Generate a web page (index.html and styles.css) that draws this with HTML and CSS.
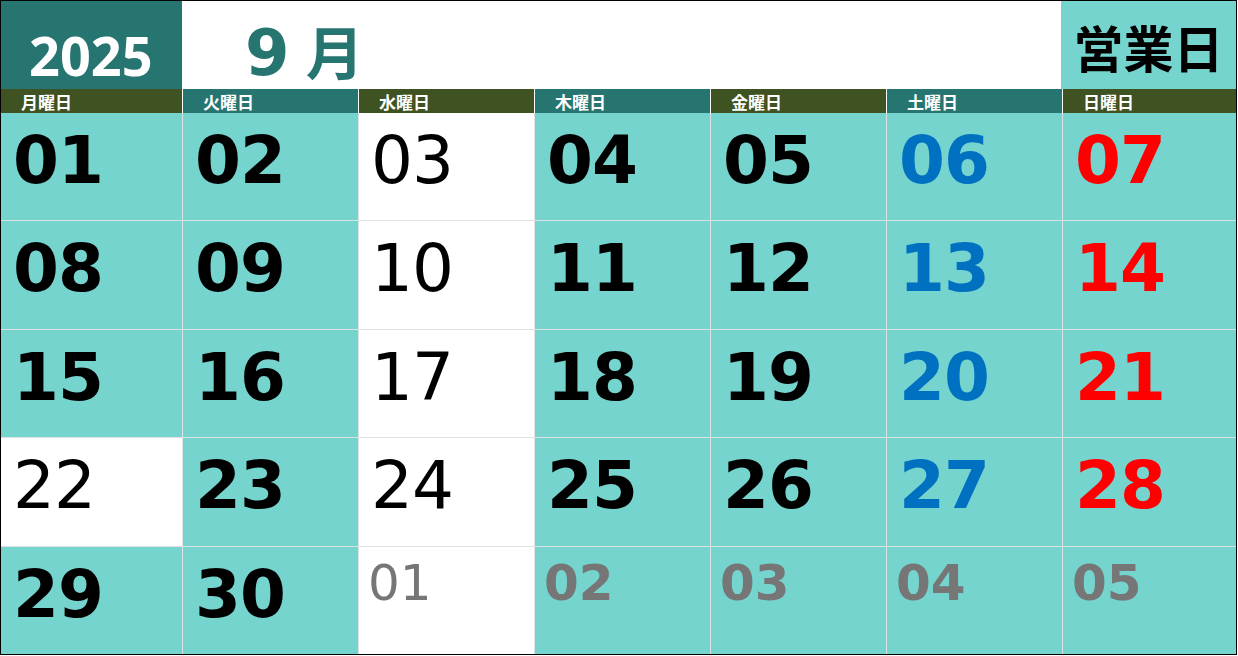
FILE: index.html
```html
<!DOCTYPE html>
<html lang="ja">
<head>
<meta charset="utf-8">
<meta name='viewport' content='width=device-width,initial-scale=1.0'/>
<title>2025年9月 営業日カレンダー</title>
<link rel="stylesheet" href="styles.css">
</head>
<body>

<section class="calendar">

    <header class="cal-head">
        <div class="year">2025</div>
        <div class="month">9 <span class="kanji">月</span></div>
        <div class="legend">営業日</div>
    </header>

    <div class="weekdays">
        <div class="wd olive">月曜日</div>
        <div class="wd teal">火曜日</div>
        <div class="wd olive">水曜日</div>
        <div class="wd teal">木曜日</div>
        <div class="wd olive">金曜日</div>
        <div class="wd teal">土曜日</div>
        <div class="wd olive">日曜日</div>
    </div>

    <div class="days">
        <div class="day">01</div>
        <div class="day">02</div>
        <div class="day off">03</div>
        <div class="day">04</div>
        <div class="day">05</div>
        <div class="day sat">06</div>
        <div class="day sun">07</div>

        <div class="day">08</div>
        <div class="day">09</div>
        <div class="day off">10</div>
        <div class="day">11</div>
        <div class="day">12</div>
        <div class="day sat">13</div>
        <div class="day sun">14</div>

        <div class="day">15</div>
        <div class="day">16</div>
        <div class="day off">17</div>
        <div class="day">18</div>
        <div class="day">19</div>
        <div class="day sat">20</div>
        <div class="day sun">21</div>

        <div class="day off">22</div>
        <div class="day">23</div>
        <div class="day off">24</div>
        <div class="day">25</div>
        <div class="day">26</div>
        <div class="day sat">27</div>
        <div class="day sun">28</div>

        <div class="day">29</div>
        <div class="day">30</div>
        <div class="day off next">01</div>
        <div class="day next">02</div>
        <div class="day next">03</div>
        <div class="day next">04</div>
        <div class="day next">05</div>
    </div>

</section>

</body>
</html>
```

FILE: styles.css
```css
body {
    margin: 0;
    background: #fff;
    font-family: "DejaVu Sans", "Noto Sans CJK JP", sans-serif;
}

.calendar {
    width: 1237px;
    height: 655px;
    box-sizing: border-box;
    border: 1px solid #000;
    display: flex;
    flex-direction: column;
}

/* top band: year / month / legend */
.cal-head {
    display: flex;
    height: 88px;
    flex: none;
}

.year {
    width: 181px;
    background: #267571;
    color: #fff;
    font-family: "Noto Sans", sans-serif;
    font-weight: 700;
    font-size: 54px;
    line-height: 1;
    padding: 27px 0 0 28px;
    box-sizing: border-box;
    overflow: hidden;
}

.month {
    flex: 1;
    color: #267571;
    font-weight: 700;
    font-size: 64px;
    line-height: 1;
    padding: 20px 0 0 63px;
    word-spacing: -6px;
}

.month .kanji {
    font-family: "Noto Sans CJK JP", sans-serif;
    font-size: 58px;
}

.legend {
    width: 175px;
    background: #76d4ce;
    color: #000;
    font-family: "Noto Sans CJK JP", sans-serif;
    font-weight: 700;
    font-size: 50px;
    display: flex;
    align-items: center;
    justify-content: center;
    padding-top: 2px;
    box-sizing: border-box;
}

/* weekday labels */
.weekdays {
    display: grid;
    grid-template-columns: 181px repeat(5, 175px) 1fr;
    column-gap: 1px;
    height: 24px;
    flex: none;
    background: #fff;
}

.wd {
    color: #fff;
    font-family: "Noto Sans CJK JP", sans-serif;
    font-weight: 700;
    font-size: 17px;
    line-height: 24px;
    padding: 1px 0 0 20px;
    box-sizing: border-box;
    overflow: hidden;
}

.olive { background: #3f5221; }
.teal  { background: #267571; }

/* day grid */
.days {
    flex: 1;
    display: grid;
    grid-template-columns: 181px repeat(5, 175px) 1fr;
    grid-template-rows: repeat(5, 1fr);
    gap: 1px;
    background: #dde3e2;
}

.day {
    background: #76d4ce;
    color: #000;
    font-weight: 700;
    font-size: 66px;
    letter-spacing: -1px;
    line-height: 1;
    padding: 15px 0 0 12px;
}

.day.off {
    background: #fff;
    font-weight: 400;
}

.day.sat { color: #0070c0; }
.day.sun { color: #ff0000; }

.day.next {
    color: #767676;
    font-size: 50px;
    letter-spacing: 0;
    padding: 11px 0 0 9px;
}
```
